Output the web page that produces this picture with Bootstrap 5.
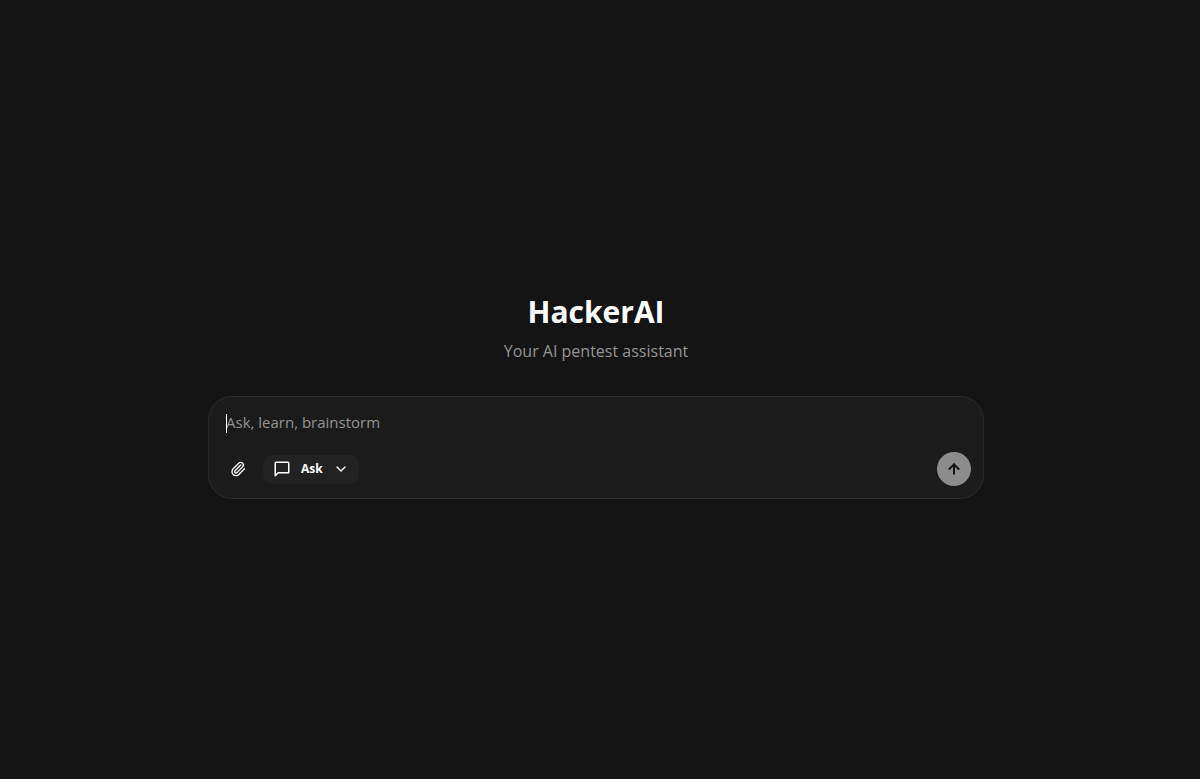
<!DOCTYPE html>
<html lang="en">
<head>
<meta charset="utf-8">
<meta name="viewport" content="width=device-width, initial-scale=1">
<title>HackerAI</title>
<link href="https://cdn.jsdelivr.net/npm/bootstrap@5.3.0/dist/css/bootstrap.min.css" rel="stylesheet">
<style>
  body { background: #141414; color: #fff; font-family: "Open Sans", "Noto Sans", sans-serif; }
  main { padding: 12px 24px 0 16px; }
  h1 { font-size: 30px; line-height: 40px; }
  .tagline { font-size: 16px; line-height: 22px; color: #949494; }
  .composer { max-width: 776px; margin-top: 34px; background: #1b1b1b; border: 1px solid #2c2c2c; border-radius: 24px; padding: 12px; }
  .prompt { height: 27px; line-height: 27px; font-size: 15px; padding: 0 5px; color: #fff; caret-color: transparent; resize: none; overflow: hidden; }
  .prompt::placeholder { color: #949494; opacity: 1; }
  .caret { left: 5px; top: 5px; width: 1px; height: 19px; background: #fff; }
  .attach { width: 34px; height: 34px; color: #fff; }
  .mode { height: 29px; padding: 0 10px; background: #222; border: 0; border-radius: 9px; color: #fff; font-size: 12px; line-height: 16px; font-weight: 700; }
  .mode-name { margin: 0 10px; }
  .send { width: 34px; height: 34px; background: #8c8c8c; color: #141414; }
  svg { fill: none; stroke: currentColor; stroke-width: 2; stroke-linecap: round; stroke-linejoin: round; flex: none; }
  .send svg { stroke-width: 3; }
</style>
</head>
<body>
<main class="min-vh-100 d-flex flex-column align-items-center justify-content-center">
  <h1 class="fw-bold mb-2">HackerAI</h1>
  <p class="tagline mb-0">Your AI pentest assistant</p>
  <form class="composer w-100">
    <div class="position-relative">
      <textarea class="prompt d-block w-100 border-0 bg-transparent shadow-none" rows="1" aria-label="Message" placeholder="Ask, learn, brainstorm"></textarea>
      <span class="caret position-absolute" aria-hidden="true"></span>
    </div>
    <div class="d-flex align-items-center pt-3">
      <button type="button" class="attach btn p-0 border-0 d-flex align-items-center justify-content-center" aria-label="Attach file">
        <svg width="16" height="16" viewBox="0 0 24 24"><path d="m16 6-8.414 8.586a2 2 0 0 0 2.829 2.829l8.414-8.586a4 4 0 1 0-5.657-5.657l-8.379 8.551a6 6 0 1 0 8.485 8.485l8.379-8.551"/></svg>
      </button>
      <button type="button" class="mode btn d-flex align-items-center ms-2">
        <svg width="18" height="18" viewBox="0 0 24 24"><path d="M21 17H7l-4 4V4a1 1 0 0 1 1-1h16a1 1 0 0 1 1 1v12a1 1 0 0 1-1 1"/></svg>
        <span class="mode-name">Ask</span>
        <svg width="16" height="16" viewBox="0 0 24 24"><path d="m6 9 6 6 6-6"/></svg>
      </button>
      <button type="submit" class="send btn rounded-circle border-0 p-0 ms-auto d-flex align-items-center justify-content-center" aria-label="Send">
        <svg width="16" height="16" viewBox="0 0 24 24"><path d="m5 12 7-7 7 7"/><path d="M12 19V5"/></svg>
      </button>
    </div>
  </form>
</main>
<script src="https://cdn.jsdelivr.net/npm/bootstrap@5.3.0/dist/js/bootstrap.bundle.min.js"></script>
</body>
</html>
